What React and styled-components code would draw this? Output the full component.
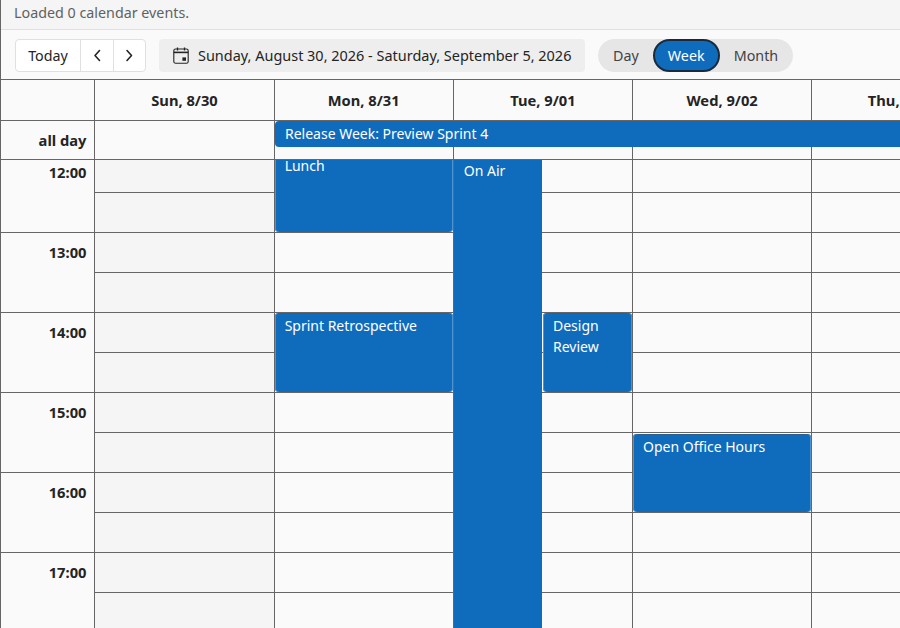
import React from "react";
import styled, { createGlobalStyle } from "styled-components";

const GlobalStyle = createGlobalStyle`
   html, body {
      margin: 0;
      padding: 0;
      height: 100%;
      overflow: hidden;
      background: #fafafa;
      font-family: "Noto Sans", "Open Sans", sans-serif;
   }
`;

const days = ["Sun, 8/30", "Mon, 8/31", "Tue, 9/01", "Wed, 9/02", "Thu, 9/03"];
const hours = ["12:00", "13:00", "14:00", "15:00", "16:00", "17:00"];

const events = {
   1: [
      { title: "Lunch", top: 0, height: 79, left: 0, width: 178 },
      { title: "Sprint Retrospective", top: 160, height: 79, left: 0, width: 178 },
   ],
   2: [
      { title: "On Air", top: 5, height: 480, left: 0, width: 88.5, square: true },
      { title: "Design Review", top: 160, height: 79, left: 89.2, width: 88.8 },
   ],
   3: [{ title: "Open Office Hours", top: 281, height: 78, left: 0, width: 178 }],
};

const App = () => {
   return (
      <Page>
         <GlobalStyle />
         <EdgeMark $top={127} />
         <EdgeMark $top={175} />
         <StatusBar>Loaded 0 calendar events.</StatusBar>
         <Toolbar>
            <ButtonGroup>
               <ToolButton $width={65}>Today</ToolButton>
               <ToolButton $width={33} aria-label="Previous">
                  <Chevron d="M6.5 1.5 2 6.5l4.5 5" />
               </ToolButton>
               <ToolButton $width={31} aria-label="Next">
                  <Chevron d="M2 1.5l4.5 5-4.5 5" />
               </ToolButton>
            </ButtonGroup>
            <DateRange>
               <CalendarIcon />
               Sunday, August 30, 2026 - Saturday, September 5, 2026
            </DateRange>
            <ViewSwitch>
               <ViewButton>Day</ViewButton>
               <ViewButton $active>Week</ViewButton>
               <ViewButton>Month</ViewButton>
            </ViewSwitch>
         </Toolbar>
         <Calendar>
            <HeaderRow>
               <Gutter />
               {days.map((day) => (
                  <DayHeader key={day}>{day}</DayHeader>
               ))}
            </HeaderRow>
            <AllDayRow>
               <AllDayLabel>all day</AllDayLabel>
               {days.map((day) => (
                  <AllDayCell key={day} />
               ))}
               <AllDayEvent>Release Week: Preview Sprint 4</AllDayEvent>
            </AllDayRow>
            <Scroller>
               <TimeGrid>
                  <TimeColumn>
                     {hours.map((hour) => (
                        <HourLabel key={hour}>{hour}</HourLabel>
                     ))}
                  </TimeColumn>
                  {days.map((day, i) => (
                     <DayColumn key={day} $off={i === 0}>
                        {hours.map((hour) => (
                           <React.Fragment key={hour}>
                              <Slot />
                              <Slot />
                           </React.Fragment>
                        ))}
                        {(events[i] || []).map((ev) => (
                           <EventCard
                              key={ev.title}
                              $square={ev.square}
                              style={{ top: ev.top, height: ev.height, left: ev.left, width: ev.width }}
                           >
                              {ev.title}
                           </EventCard>
                        ))}
                     </DayColumn>
                  ))}
               </TimeGrid>
            </Scroller>
         </Calendar>
      </Page>
   );
};

const Chevron = ({ d }) => (
   <svg width="9" height="13" viewBox="0 0 9 13" fill="none" stroke="#242424" strokeWidth="1.6" strokeLinecap="round" strokeLinejoin="round">
      <path d={d} />
   </svg>
);

const CalendarIcon = () => (
   <DateIcon width="16" height="17" viewBox="0 0 16 17" fill="none" stroke="#242424" strokeWidth="1.1">
      <rect x="0.8" y="2" width="14.4" height="14.2" rx="1.8" />
      <path d="M0.8 5.4h14.4" strokeWidth="1.6" />
      <path d="M4.5 0.4v3M11.5 0.4v3" strokeWidth="1.3" />
      <rect x="9.4" y="10.4" width="3.6" height="3.4" fill="#242424" stroke="none" />
   </DateIcon>
);

const gridColumns = "93.45px repeat(5, 179.2px)";

const Page = styled.div`
   position: relative;
   width: 900px;
   height: 628px;
   overflow: hidden;
   box-sizing: border-box;
   border-left: 1px solid #666;
   display: flex;
   flex-direction: column;
   color: #242424;
`;

const EdgeMark = styled.div`
   position: absolute;
   left: -1px;
   top: ${(p) => p.$top}px;
   width: 1px;
   height: 10px;
   background: #5fd06a;
`;

const StatusBar = styled.div`
   height: 30px;
   flex: none;
   box-sizing: border-box;
   padding: 0 0 5px 13px;
   display: flex;
   align-items: center;
   background: #f5f5f5;
   border-bottom: 1px solid #e0e0e0;
   color: #616161;
   font-size: 14.3px;
`;

const Toolbar = styled.div`
   height: 49px;
   flex: none;
   box-sizing: border-box;
   padding: 9px 0 7px 14px;
   display: flex;
   gap: 13px;
   background: #fafafa;
`;

const ButtonGroup = styled.div`
   display: flex;
   height: 33px;
   box-sizing: border-box;
   border: 1px solid #e0e0e0;
   border-radius: 4px;
   background: #fff;
`;

const ToolButton = styled.button`
   width: ${(p) => p.$width}px;
   padding: 0;
   border: 0;
   border-right: 1px solid #e0e0e0;
   background: none;
   display: flex;
   align-items: center;
   justify-content: center;
   color: #242424;
   font: 14.3px "Noto Sans", sans-serif;

   &:last-child {
      border-right: 0;
   }
`;

const DateRange = styled.div`
   width: 426px;
   height: 33px;
   box-sizing: border-box;
   padding-left: 14px;
   display: flex;
   align-items: center;
   gap: 9px;
   background: #eeeeee;
   border-radius: 4px;
   font-size: 14.46px;
   white-space: nowrap;
`;

const DateIcon = styled.svg`
   flex: none;
   margin-top: -1px;
`;

const ViewSwitch = styled.div`
   width: 195px;
   height: 33px;
   box-sizing: border-box;
   padding-left: 15px;
   display: flex;
   background: #e6e6e6;
   border-radius: 17px;
`;

const ViewButton = styled.button`
   height: 33px;
   box-sizing: border-box;
   padding: 0;
   margin: 0 ${(p) => (p.$active ? "14px" : "0")};
   width: ${(p) => (p.$active ? "67px" : "auto")};
   border: ${(p) => (p.$active ? "2px solid #1b2a3a" : "0")};
   border-radius: 17px;
   background: ${(p) => (p.$active ? "#0f6cbd" : "transparent")};
   color: ${(p) => (p.$active ? "#fff" : "#424242")};
   font: 14.3px "Noto Sans", sans-serif;
`;

const Calendar = styled.div`
   flex: 1;
   min-height: 0;
   display: flex;
   flex-direction: column;
   border-top: 1px solid #666;
`;

const HeaderRow = styled.div`
   display: grid;
   grid-template-columns: ${gridColumns};
   height: 40px;
   flex: none;
   border-bottom: 1px solid #666;
   background: #fafafa;
`;

const Gutter = styled.div``;

const DayHeader = styled.div`
   box-sizing: border-box;
   border-left: 1px solid #666;
   display: flex;
   align-items: center;
   justify-content: center;
   font-size: 14.7px;
   font-weight: 700;
   white-space: nowrap;
`;

const AllDayRow = styled.div`
   position: relative;
   display: grid;
   grid-template-columns: ${gridColumns};
   height: 38px;
   flex: none;
   border-bottom: 1px solid #666;
   background: #fafafa;
`;

const AllDayLabel = styled.div`
   box-sizing: border-box;
   padding: 9px 8px 0 0;
   text-align: right;
   font-size: 14.7px;
   font-weight: 700;
`;

const AllDayCell = styled.div`
   box-sizing: border-box;
   border-left: 1px solid #666;
   background: #fafafa;
`;

const AllDayEvent = styled.div`
   position: absolute;
   top: 0;
   left: 274px;
   right: 0;
   height: 26px;
   box-sizing: border-box;
   padding: 0 0 2px 10px;
   display: flex;
   align-items: center;
   background: #0f6cbd;
   color: #fff;
   font-size: 14px;
   border-radius: 4px 0 0 4px;
`;

const Scroller = styled.div`
   flex: 1;
   min-height: 0;
   overflow: hidden;
`;

const TimeGrid = styled.div`
   display: grid;
   grid-template-columns: ${gridColumns};
   margin-top: -7px;
   background: #fafafa;
`;

const TimeColumn = styled.div``;

const HourLabel = styled.div`
   height: 80px;
   box-sizing: border-box;
   padding: 9px 8px 0 0;
   border-bottom: 1px solid #666;
   text-align: right;
   font-size: 14.7px;
   font-weight: 700;
`;

const DayColumn = styled.div`
   position: relative;
   box-sizing: border-box;
   border-left: 1px solid #666;
   background: ${(p) => (p.$off ? "#f5f5f5" : "#fafafa")};
`;

const Slot = styled.div`
   height: 40px;
   box-sizing: border-box;
   border-bottom: 1px solid #666;
`;

const EventCard = styled.div`
   position: absolute;
   box-sizing: border-box;
   padding: 2px 10px;
   background: #0f6cbd;
   color: #fff;
   font-size: 14px;
   line-height: 21px;
   border-radius: ${(p) => (p.$square ? "0" : "4px")};
   box-shadow: ${(p) =>
      p.$square
         ? "none"
         : "inset 1px 0 0 #4f93cf, inset -1px 0 0 #4f93cf, inset 0 1px 0 #2f5f8a"};
`;

export default App;
